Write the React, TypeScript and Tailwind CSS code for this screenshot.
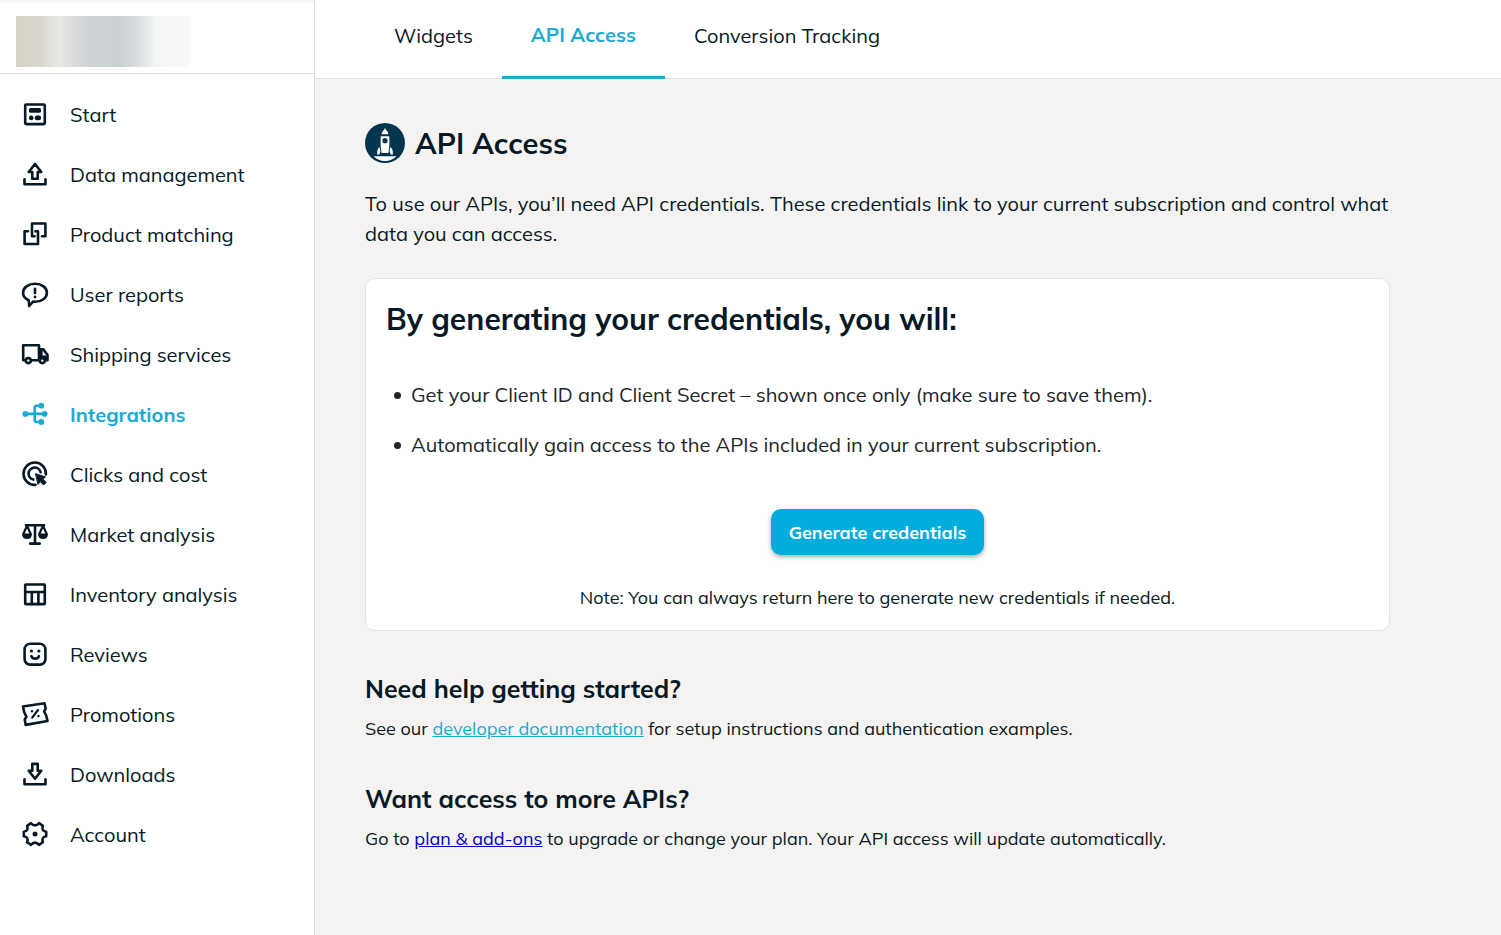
import type { ReactNode } from "react";
import clsx from "clsx";

function Icon({ children }: { children: ReactNode }) {
  return (
    <svg
      viewBox="0 1 30 30"
      className="size-[30px] shrink-0"
      fill="none"
      stroke="currentColor"
      strokeWidth="2.6"
      strokeLinecap="round"
      strokeLinejoin="round"
      aria-hidden="true"
    >
      {children}
    </svg>
  );
}

const tray = <path d="M4.5 20.2V25.2H25.5V20.2" />;

const navItems: { label: string; icon: ReactNode; active?: boolean }[] = [
  {
    label: "Start",
    icon: (
      <>
        <rect x="5.2" y="5.5" width="19.6" height="19.6" rx="1" />
        <g fill="currentColor" stroke="none">
          <rect x="9" y="9" width="12" height="4.8" rx="1.5" />
          <rect x="9" y="16.4" width="4.4" height="4.8" rx="2" />
          <rect x="14.8" y="16.4" width="6.2" height="4.8" rx="2" />
        </g>
      </>
    ),
  },
  {
    label: "Data management",
    icon: (
      <>
        <path d="M15 5L21.3 13H17.7V19.8H12.3V13H8.7Z" />
        {tray}
      </>
    ),
  },
  {
    label: "Product matching",
    icon: (
      <>
        <path d="M22 17.2H25.4V4.5H12V17.2H14.6" />
        <path d="M8 12.2H4.6V25H18V12.2H15.4" />
      </>
    ),
  },
  {
    label: "User reports",
    icon: (
      <>
        <path d="M15 4.8C21.8 4.8 26.9 8.6 26.9 13.8S21.8 22.8 15 22.8C14.2 22.8 13.6 22.8 13 22.6L9.2 27L8.6 21.2C5.3 19.8 3.1 17.1 3.1 13.8C3.1 8.6 8.2 4.8 15 4.8Z" />
        <path d="M15 9.8V14" />
        <circle cx="15" cy="18" r="1.4" fill="currentColor" stroke="none" />
      </>
    ),
  },
  {
    label: "Shipping services",
    icon: (
      <>
        <path d="M4.8 21.2H3.2V6.2H19V21.2H12" />
        <path d="M19 10.4H23.4L27.5 16V21.2H26" />
        <path d="M19 10V21.5H27.8V16.5H22.6V10Z" fill="currentColor" stroke="none" />
        <circle cx="8.3" cy="21.6" r="2.5" fill="white" />
        <circle cx="22.3" cy="21.6" r="2.5" fill="white" />
      </>
    ),
  },
  {
    label: "Integrations",
    active: true,
    icon: (
      <>
        <path d="M5 14.9H25M21 6.7H16.7Q14.7 6.7 14.7 8.7V21Q14.7 23 16.7 23H21" />
        <g fill="currentColor" stroke="none">
          <circle cx="5.4" cy="14.9" r="2.9" />
          <circle cx="24.6" cy="14.9" r="2.9" />
          <circle cx="21.3" cy="6.7" r="2.9" />
          <circle cx="21.3" cy="23" r="2.9" />
        </g>
      </>
    ),
  },
  {
    label: "Clicks and cost",
    icon: (
      <>
        <path d="M25.9 15.5A11.2 11.2 0 1 0 15.5 25.9" />
        <path d="M20.6 13.2A6.1 6.1 0 1 0 13.2 20.6" />
        <path
          d="M15.8 14.8L25.4 17.9L22.8 20L26.2 23.4L23.6 26L20.2 22.6L18.2 25.2Z"
          fill="currentColor"
          strokeWidth="1"
        />
      </>
    ),
  },
  {
    label: "Market analysis",
    icon: (
      <>
        <path d="M6 6.2H24M15 6.2V24.5M10.2 24.6H19.8" />
        <path
          d="M7 6.8L3.2 15.2C3.2 20 10.8 20 10.8 15.2ZM23 6.8L19.2 15.2C19.2 20 26.8 20 26.8 15.2Z"
          strokeWidth="2.2"
        />
        <path
          d="M2.6 14.6H11.4C11.4 20.4 2.6 20.4 2.6 14.6ZM18.6 14.6H27.4C27.4 20.4 18.6 20.4 18.6 14.6Z"
          fill="currentColor"
          stroke="none"
        />
      </>
    ),
  },
  {
    label: "Inventory analysis",
    icon: (
      <>
        <rect x="5.2" y="5.5" width="19.6" height="19.6" rx="0.6" />
        <path d="M5.2 13H24.8M11.8 13V25M18.4 13V25" />
      </>
    ),
  },
  {
    label: "Reviews",
    icon: (
      <>
        <rect x="4.6" y="4.8" width="20.8" height="20.8" rx="5.5" />
        <path d="M11.4 17.2C12.6 20.4 17.7 20.4 18.9 17.2" />
        <g fill="currentColor" stroke="none">
          <circle cx="11.4" cy="12" r="1.6" />
          <circle cx="18.9" cy="12" r="1.6" />
        </g>
      </>
    ),
  },
  {
    label: "Promotions",
    icon: (
      <>
        <path d="M3 7.5L24.5 4.3L25.7 9.8L24 12.2L26.2 16.5L27.5 22L5.7 25.9L4.7 20.4L6.5 17.8L4.1 13Z" />
        <path d="M18 11L12.2 18.6" strokeWidth="2.2" />
        <circle cx="12" cy="12.3" r="1.2" fill="currentColor" stroke="none" />
        <circle cx="18.5" cy="17" r="1.2" fill="currentColor" stroke="none" />
      </>
    ),
  },
  {
    label: "Downloads",
    icon: (
      <>
        <path d="M12.3 4.9H17.7V11.8H21.3L15 19.7L8.7 11.8H12.3Z" />
        {tray}
      </>
    ),
  },
  {
    label: "Account",
    icon: (
      <>
        <path d="M26.2 12.8V17.2Q23.4 17.6 22.8 19.2Q22 20.6 22.9 23.2L19 25.8Q17.2 23.6 15 23.6T11 25.8L7.1 23.2Q8 20.6 7.2 19.2Q6.6 17.6 3.8 17.2V12.8Q6.6 12.4 7.2 10.8Q8 9.4 7.1 6.8L11 4.2Q12.8 6.4 15 6.4T19 4.2L22.9 6.8Q22 9.4 22.8 10.8Q23.4 12.4 26.2 12.8Z" />
        <circle cx="15" cy="15" r="2.5" fill="currentColor" stroke="none" />
      </>
    ),
  },
];

const tabs = [
  { label: "Widgets" },
  { label: "API Access", active: true },
  { label: "Conversion Tracking" },
];

function Sidebar() {
  return (
    <aside className="w-[315px] shrink-0 border-r border-[#dcdcde] bg-white">
      <div className="h-[74px] border-b border-[#dcdcde] bg-linear-to-b from-[#f2f2f2] to-white to-[4px] px-4 pt-4">
        <div className="h-[51px] w-[174px] bg-[linear-gradient(to_right,#d5d1c5,#dad7cc_14%,#e8e8e5_25%,#cdd2d5_42%,#cacfd2_60%,#d9dee1_70%,#f3f5f6_80%,#fafafa)]" />
      </div>
      <nav className="pt-[11px]">
        {navItems.map((item) => (
          <a
            key={item.label}
            href="#"
            className={clsx(
              "flex h-[60px] items-center gap-5 px-5 text-xl",
              item.active ? "font-bold text-[#1caad3]" : "text-[#061925]",
            )}
          >
            <Icon>{item.icon}</Icon>
            {item.label}
          </a>
        ))}
      </nav>
    </aside>
  );
}

function RocketBadge() {
  return (
    <svg viewBox="0 0 40 40" className="size-10 shrink-0" fill="white" aria-hidden="true">
      <circle cx="20" cy="20" r="20" fill="#04354f" />
      <path d="M20 4.8L21 7C22.4 8 23.2 9.4 23.4 11.2H16.6C16.8 9.4 17.6 8 19 7Z" />
      <path d="M15.8 13.2H24.2C24.6 18 24.5 24 23.4 30H16.6C15.5 24 15.4 18 15.8 13.2Z" />
      <path d="M14.6 24L15.4 28L14.4 31.4H12.2C11.8 28.4 12.6 25.4 14.6 24ZM25.4 24L24.6 28L25.6 31.4H27.8C28.2 28.4 27.4 25.4 25.4 24Z" />
      <circle cx="20" cy="17.7" r="2.6" fill="#04354f" />
      <path d="M8.5 33.2H31.500C28.500 36.400 24.500 38 20 38S11.500 36.400 8.500 33.200Z" />
    </svg>
  );
}

export default function App() {
  return (
    <div className="flex min-h-screen bg-[#f5f3f2] font-['Mulish','Open_Sans',sans-serif] text-[#061925]">
      <Sidebar />
      <div className="min-w-0 flex-1">
        <nav className="flex h-[79px] border-b border-[#e4e4e6] bg-white pl-[50px]">
          {tabs.map((tab) => (
            <a
              key={tab.label}
              href="#"
              className={clsx(
                "-mb-px px-[29px] text-xl/[30px]",
                tab.active
                  ? "border-b-3 border-[#1caad3] pt-5 font-bold text-[#1caad3]"
                  : "pt-[21px]",
              )}
            >
              {tab.label}
            </a>
          ))}
        </nav>

        <main className="mr-12 max-w-[1075px] pt-11 pl-[50px]">
          <div className="flex items-center gap-[10px]">
            <RocketBadge />
            <h1 className="text-[29px]/[40px] font-bold">API Access</h1>
          </div>
          <p className="mt-[26px] text-xl/[30px]">
            To use our APIs, you’ll need API credentials. These credentials link to your current
            subscription and control what data you can access.
          </p>

          <section className="mt-[29px] rounded-[10px] border border-[#e2e2e4] bg-white px-5 pt-5 pb-[18px]">
            <h2 className="text-3xl/[40px] font-bold">By generating your credentials, you will:</h2>
            <ul className="mt-[41px] space-y-5 pl-2 text-xl/[30px] text-[#212529]">
              <li className="flex items-center gap-[10px] before:size-[7px] before:shrink-0 before:rounded-full before:bg-[#212529]">
                Get your Client ID and Client Secret – shown once only (make sure to save them).
              </li>
              <li className="flex items-center gap-[10px] before:size-[7px] before:shrink-0 before:rounded-full before:bg-[#212529]">
                Automatically gain access to the APIs included in your current subscription.
              </li>
            </ul>
            <div className="mt-[49px] flex flex-col items-center">
              <button
                type="button"
                className="h-[46px] rounded-[10px] bg-[#02acdd] px-[18px] pt-0.5 text-lg font-bold text-white shadow-[0_2px_4px_rgba(0,0,0,0.35)]"
              >
                Generate credentials
              </button>
              <p className="mt-[29px] text-lg/[28px]">
                Note: You can always return here to generate new credentials if needed.
              </p>
            </div>
          </section>

          <h3 className="mt-[42px] text-[25px]/[32px] font-bold">Need help getting started?</h3>
          <p className="mt-[10px] text-lg/[28px]">
            See our{" "}
            <a href="#" className="text-[#1caad3] underline">
              developer documentation
            </a>{" "}
            for setup instructions and authentication examples.
          </p>

          <h3 className="mt-10 text-[25px]/[32px] font-bold">Want access to more APIs?</h3>
          <p className="mt-[10px] text-lg/[28px]">
            Go to{" "}
            <a href="#" className="text-[#0000c8] underline">
              plan &amp; add-ons
            </a>{" "}
            to upgrade or change your plan. Your API access will update automatically.
          </p>
        </main>
      </div>
    </div>
  );
}
